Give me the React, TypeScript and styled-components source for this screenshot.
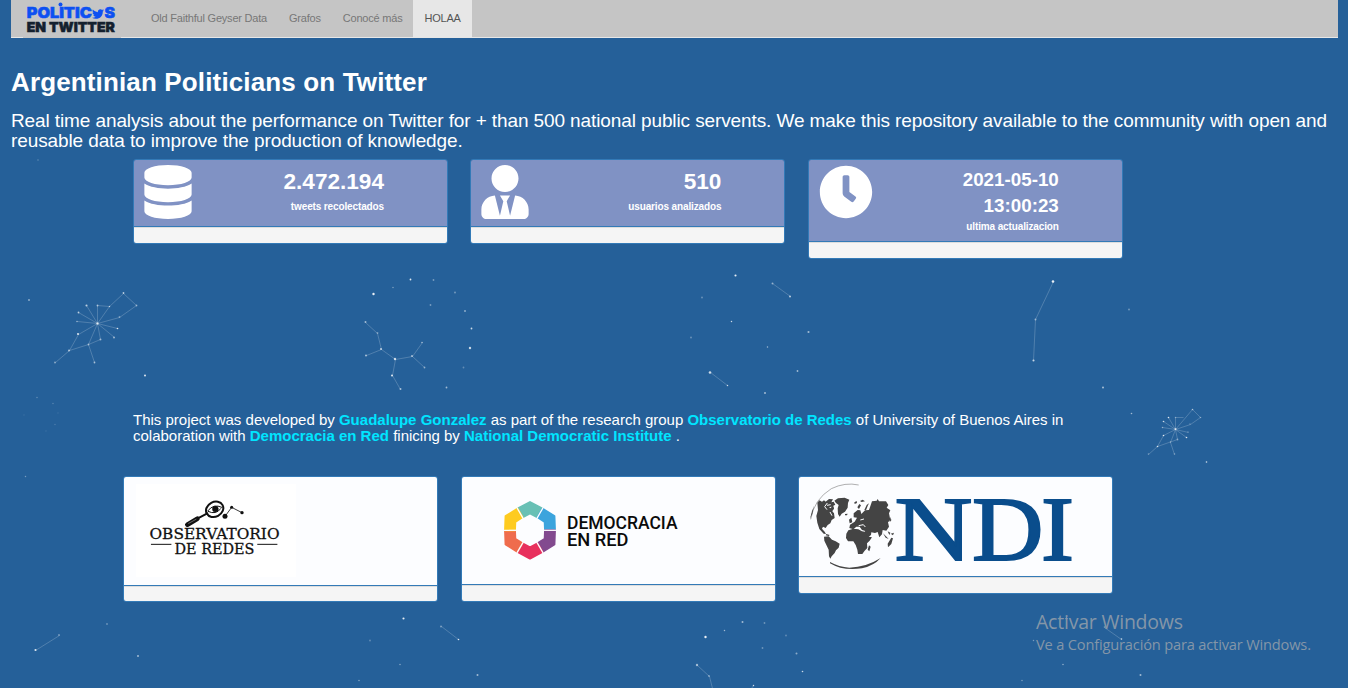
import React from 'react';
import styled, { createGlobalStyle } from 'styled-components';
import { FaClock, FaDatabase, FaTwitter, FaUserTie } from 'react-icons/fa';

const GlobalStyle = createGlobalStyle`
  * { box-sizing: border-box; }
  body {
    margin: 0;
    background: #256099;
    color: #fff;
    font-family: "Liberation Sans", Arial, sans-serif;
    overflow: hidden;
  }
`;

const Page = styled.div`
  position: relative;
  height: 688px;
  padding: 0 10px 0 11px;
  overflow: hidden;
`;

const Sky = styled.svg`
  position: absolute;
  inset: 0;
  pointer-events: none;
`;

const Navbar = styled.nav`
  position: relative;
  display: flex;
  height: 38px;
  background: #c5c5c5;
  border-bottom: 1px solid #e7e7e7;
`;

const Brand = styled.a`
  display: block;
  width: 98px;
  height: 38px;
  margin: 0 19px 0 12px;
  background: #c5c5c5;
`;

const NavItem = styled.a<{ $active?: boolean }>`
  height: 37px;
  padding: 0 11px;
  font-size: 11px;
  line-height: 37px;
  white-space: nowrap;
  letter-spacing: -0.21px;
  color: ${(p) => (p.$active ? '#555' : '#777')};
  background: ${(p) => (p.$active ? '#e7e7e7' : 'transparent')};
`;

const Content = styled.main`
  position: relative;
`;

const Title = styled.h1`
  margin: 28px 0 0;
  font-size: 26px;
  line-height: 32px;
  font-weight: 700;
  letter-spacing: 0.14px;
  white-space: nowrap;
`;

const Lead = styled.p`
  margin: 13px 0 0;
  font-size: 19px;
  line-height: 20px;
  letter-spacing: -0.107px;
  white-space: nowrap;
`;

const CardRow = styled.section<{ $left: number; $top: number; $height: number }>`
  display: flex;
  align-items: flex-start;
  gap: 22.4px;
  height: ${(p) => p.$height}px;
  margin: ${(p) => p.$top}px 0 0 ${(p) => p.$left}px;
`;

const Panel = styled.article`
  width: 315px;
  flex: none;
  border: 1px solid #337ab7;
  border-radius: 3px;
  overflow: hidden;
`;

const StatHeading = styled.div<{ $height: number }>`
  display: flex;
  justify-content: space-between;
  height: ${(p) => p.$height}px;
  padding: 5px 63px 0 10px;
  background: #8092c4;
  border-bottom: 1px solid #337ab7;
`;

const StatText = styled.div`
  text-align: right;
  font-weight: 700;
`;

const StatValue = styled.div<{ $small?: boolean }>`
  margin-top: ${(p) => (p.$small ? 2 : 4)}px;
  font-size: ${(p) => (p.$small ? 18.8 : 22.6)}px;
  line-height: 26px;
  white-space: pre-line;
`;

const StatLabel = styled.div<{ $small?: boolean }>`
  margin-top: ${(p) => (p.$small ? 1 : 5)}px;
  font-size: 10px;
  line-height: 14px;
  letter-spacing: -0.13px;
`;

const PanelFooter = styled.div<{ $height?: number }>`
  height: ${(p) => p.$height ?? 16}px;
  background: #f5f5f5;
  border-top: 1px solid #ddd;
`;

const LogoBody = styled.div<{ $height: number }>`
  height: ${(p) => p.$height}px;
  background: #fcfdff;
  border-bottom: 1px solid #337ab7;
`;

const LogoSvg = styled.svg`
  display: block;
  overflow: visible;
`;

const Credits = styled.p`
  margin: 152px 0 0 122px;
  font-size: 15px;
  line-height: 16px;
  white-space: nowrap;
`;

const CreditLink = styled.a`
  color: #00e5ff;
  font-weight: 700;
`;

const Watermark = styled.div`
  position: absolute;
  left: 1036px;
  top: 609px;
  color: #8496a8;
  font-family: "Open Sans", "Noto Sans", sans-serif;
  white-space: nowrap;
`;

const WatermarkTitle = styled.div`
  font-size: 19.5px;
  line-height: 26px;
  letter-spacing: -0.22px;
`;

const WatermarkText = styled.div`
  font-size: 14.6px;
  line-height: 19px;
  letter-spacing: -0.16px;
`;

type Star = [x: number, y: number, r: number, opacity: number];
type Link = [x1: number, y1: number, x2: number, y2: number];

const stars: Star[] = [
  [29, 300, 1.1, 0.5], [145, 375.5, 1.2, 0.85], [123.5, 293, 1, 0.7], [136.5, 305.5, 1, 0.5],
  [86.5, 305.5, 1.2, 0.7], [97.5, 305.5, 1, 0.6], [109.5, 306.5, 0.8, 0.7], [78.5, 312.5, 1, 0.7],
  [77, 321.5, 0.8, 0.6], [97.5, 323.5, 1.3, 0.7], [119.5, 317, 1, 0.4], [117.5, 328.5, 0.9, 0.9],
  [78, 334, 1.1, 0.9], [114, 337.5, 1, 0.6], [100.5, 339.5, 1.1, 0.5], [88.5, 344.5, 1, 0.5],
  [69, 350.5, 1, 0.7], [55, 362.5, 1, 0.5], [94.5, 362.5, 1, 0.6],
  [37, 397.5, 0.8, 0.3], [53, 403.5, 0.8, 0.25], [55, 424.5, 0.8, 0.2], [25.5, 476.5, 0.8, 0.4],
  [38, 160, 0.8, 0.3], [24, 415, 0.7, 0.12], [46, 431, 0.7, 0.12], [58, 413, 0.7, 0.12],
  [373.5, 294, 1.3, 0.95], [393, 287.5, 0.9, 0.4], [410.5, 279.5, 1, 0.9], [433.5, 280, 1, 0.4],
  [455, 292.5, 1, 0.4], [430.5, 305, 1, 0.4], [465, 311, 1.1, 0.5], [471.5, 328.5, 1, 0.8],
  [470, 348, 1.3, 0.8], [463.5, 367.5, 1, 0.3], [446.5, 387.5, 1, 0.6],
  [365.5, 322, 1.1, 0.6], [377.5, 333, 1, 0.4], [381, 349, 1.1, 0.7], [366, 355.5, 1, 0.7],
  [395, 359, 1.3, 0.8], [412, 356, 1.1, 0.6], [422, 342.5, 0.9, 0.6], [424.5, 367.5, 1, 0.5],
  [392, 375.5, 1.2, 0.85], [400.5, 389, 1.1, 0.6],
  [735.5, 275.5, 1.2, 0.95], [702, 297.5, 1, 0.35], [731.5, 321.5, 0.8, 0.8], [691, 337.5, 1, 0.35],
  [772.5, 283.5, 1.1, 0.5], [790, 296.5, 1.1, 0.7], [808.5, 332, 1.2, 0.6], [767.5, 347, 0.8, 0.6],
  [710, 372.5, 1.4, 0.8], [727.5, 385.5, 0.8, 0.8], [797.5, 371, 1, 0.6], [765, 393, 1.1, 0.6],
  [1053, 281.5, 1.4, 0.95], [1035.5, 319.5, 1.1, 0.5], [1033.5, 360.5, 1.2, 0.75],
  [1129, 309.5, 1.1, 0.35], [1103, 387.5, 1.2, 0.6],
  [1131.5, 413.5, 0.9, 0.6], [1168.5, 417.5, 0.9, 0.9], [1175.5, 417.5, 0.8, 0.4], [1163.5, 421.5, 0.9, 0.8],
  [1192.5, 409.5, 0.9, 0.6], [1200.5, 417.5, 0.9, 0.4], [1162.5, 427.5, 0.8, 0.5], [1175.5, 429, 1.1, 0.7],
  [1163.5, 435.5, 0.9, 0.9], [1186.5, 437.5, 0.9, 0.9], [1177.5, 439.5, 1, 0.4], [1157.5, 446.5, 0.9, 0.8],
  [1148.5, 454, 0.9, 0.4], [1174.5, 454, 0.9, 0.4], [1190, 424, 0.8, 0.3], [1206.5, 462, 0.9, 0.85],
  [1188, 432, 0.8, 0.3], [1170.5, 442, 0.8, 0.4],
  [35.5, 650, 1.2, 0.9], [59, 635, 1, 0.4], [107, 624, 1, 0.35], [138, 656, 1.1, 0.6],
  [403.5, 618.5, 1.2, 0.95], [441, 626.5, 1, 0.45], [458.5, 639.5, 0.9, 0.9], [370, 640.5, 1, 0.3],
  [400, 664.5, 0.9, 0.45], [359, 680.5, 0.8, 0.5], [477.5, 675, 1.1, 0.6],
  [705.5, 637, 1.3, 0.95], [724.5, 630.5, 0.8, 0.6], [742.5, 622, 1.1, 0.6], [764.5, 623, 1, 0.35],
  [786, 635.5, 1, 0.3], [762.5, 648, 1, 0.35], [796.5, 653.5, 1.1, 0.5], [802.5, 671.5, 0.9, 0.8],
  [697, 665, 1.3, 0.6], [709, 676, 1, 0.45], [753.5, 685.5, 0.8, 0.8],
  [1066.5, 618.5, 1, 0.9], [1104.5, 627, 0.9, 0.4], [1121.5, 639, 0.9, 0.8], [1033.5, 640.5, 0.8, 0.4],
  [1063, 664.5, 0.9, 0.5], [1022, 680.5, 0.9, 0.4], [1140.5, 675, 1.1, 0.6],
];

const links: Link[] = [
  [97, 323, 86, 305], [97, 323, 97, 305], [97, 323, 109, 306], [97, 323, 78, 312], [97, 323, 77, 321],
  [97, 323, 119, 317], [97, 323, 117, 328], [97, 323, 78, 334], [97, 323, 114, 337], [97, 323, 100, 339],
  [97, 323, 88, 344], [97, 305, 109, 306], [109, 306, 123, 293], [123, 293, 136, 305], [136, 305, 119, 317],
  [78, 334, 69, 350], [69, 350, 55, 362], [69, 350, 88, 344], [88, 344, 100, 339], [88, 344, 94, 362],
  [365, 322, 377, 333], [377, 333, 381, 349], [381, 349, 366, 355], [381, 349, 395, 359],
  [395, 359, 412, 356], [412, 356, 422, 342], [412, 356, 424, 367], [395, 359, 392, 375], [392, 375, 400, 389],
  [772, 283, 790, 296], [710, 372, 727, 385], [1053, 281, 1035, 319], [1035, 319, 1033, 360],
  [1175, 429, 1168, 417], [1175, 429, 1175, 417], [1175, 429, 1192, 409], [1175, 429, 1163, 421],
  [1175, 429, 1162, 427], [1175, 429, 1190, 424], [1190, 424, 1200, 417], [1192, 409, 1200, 417],
  [1175, 429, 1188, 432], [1175, 429, 1186, 437], [1175, 429, 1177, 439], [1175, 429, 1163, 435],
  [1163, 435, 1157, 446], [1157, 446, 1148, 454], [1157, 446, 1177, 439], [1175, 429, 1170, 442],
  [1170, 442, 1174, 454], [1175, 417, 1183, 417],
  [35, 650, 59, 635], [441, 626, 458, 639], [697, 665, 709, 676], [709, 676, 712, 688], [753, 685, 751, 688],
  [1104, 627, 1121, 639],
];

const Constellations = () => (
  <Sky width="1348" height="688" viewBox="0 0 1348 688" aria-hidden="true">
    {links.map(([x1, y1, x2, y2], i) => (
      <line key={i} x1={x1 + 0.5} y1={y1 + 0.5} x2={x2 + 0.5} y2={y2 + 0.5} stroke="#fff" strokeOpacity="0.22" strokeWidth="0.9" />
    ))}
    {stars.map(([x, y, r, o], i) => (
      <circle key={i} cx={x} cy={y} r={r * 0.9} fill="#fff" fillOpacity={o * 0.95} />
    ))}
  </Sky>
);

const BrandLogo = () => (
  <svg width="98" height="37" viewBox="23 0 98 37">
    <g fontFamily="Inter, sans-serif" fontWeight="900" fontSize="14.5" strokeWidth="0.5">
      <g fill="#0d50f2" stroke="#0d50f2">
        <text x="26.8" y="18.3" textLength="65" lengthAdjust="spacingAndGlyphs">POLITIC</text>
        <text x="104.5" y="18.3" textLength="10.5" lengthAdjust="spacingAndGlyphs">S</text>
      </g>
      <text x="26.8" y="31.8" fill="#14202e" stroke="#14202e" fontSize="13.5" textLength="88" lengthAdjust="spacingAndGlyphs">EN TWITTER</text>
    </g>
    <circle cx="60.5" cy="4.6" r="2" fill="#0d50f2" />
    <FaTwitter x="92" y="8" width="12" height="12" size={12} color="#0d50f2" />
  </svg>
);

const ObservatorioLogo = () => (
  <LogoSvg width="313" height="108" viewBox="124 477 313 108">
    <rect x="136" y="484" width="160" height="93" fill="#fff" />
    <g transform="translate(120 470) scale(0.33333)" stroke="#111" fill="none" strokeLinecap="round">
      <path d="M202 164 L232 146" strokeWidth="14" />
      <path d="M232 146 L262 130" strokeWidth="6" />
      <ellipse cx="284" cy="118" rx="27" ry="22" strokeWidth="6" transform="rotate(-28 284 118)" />
      <path d="M264 122 Q280 100 306 112 M264 124 Q288 136 302 116" strokeWidth="3" />
      <circle cx="286" cy="117" r="9" fill="#111" strokeWidth="1" />
      <path d="M315 139 L335 112 L366 128" strokeWidth="2.5" />
      <circle cx="315" cy="139" r="7.5" fill="#111" stroke="none" />
      <circle cx="335" cy="112" r="4.5" fill="#111" stroke="none" />
      <circle cx="366" cy="128" r="5" fill="#111" stroke="none" />
      <path d="M206 160 L228 148" stroke="#999" strokeWidth="2" />
      <path d="M94 223 H153 M413 223 H471" strokeWidth="3" />
    </g>
    <g fontFamily='"DejaVu Serif", serif' fill="#111" stroke="#111" strokeWidth="0.3">
      <text x="149.5" y="539.4" fontSize="14.6" textLength="130" lengthAdjust="spacingAndGlyphs">OBSERVATORIO</text>
      <text x="174.5" y="554.4" fontSize="14.6" textLength="80" lengthAdjust="spacingAndGlyphs">DE REDES</text>
    </g>
  </LogoSvg>
);

const hexColors = ['#68c0b5', '#3ca4dd', '#824a8f', '#e8305d', '#ef6c4d', '#fecb20'];

const hexPoint = (radius: number, step: number): [number, number] => {
  const angle = (step * Math.PI) / 3 - Math.PI / 2;
  return [530 + radius * Math.cos(angle), 530.3 + radius * Math.sin(angle)];
};

const mid = (radius: number, step: number): [number, number] =>
  hexPoint(radius * Math.cos(Math.PI / 6), step + 0.5);

const DemocraciaLogo = () => (
  <LogoSvg width="313" height="107" viewBox="462 477 313 107">
    {hexColors.map((color, i) => {
      const points = [mid(28.8, i - 1), hexPoint(28.2, i), mid(28.8, i), mid(17.4, i), hexPoint(17, i), mid(17.4, i - 1)];
      return <polygon key={color} points={points.map((p) => p.join(',')).join(' ')} fill={color} stroke={color} strokeWidth="2" strokeLinejoin="round" />;
    })}
    {hexColors.map((color, i) => {
      const a = mid(14, i);
      const b = mid(34.5, i);
      return <line key={color} x1={a[0]} y1={a[1]} x2={b[0]} y2={b[1]} stroke="#fcfdff" strokeWidth="1.3" />;
    })}
    <g fontFamily="Roboto, sans-serif" fontWeight="500" fontSize="18.6" fill="#0b0b0b">
      <text x="567" y="529.3" textLength="110.5" lengthAdjust="spacingAndGlyphs">DEMOCRACIA</text>
      <text x="567" y="545.6" textLength="61.5" lengthAdjust="spacingAndGlyphs">EN RED</text>
    </g>
  </LogoSvg>
);

const NdiLogo = () => (
  <LogoSvg width="313" height="99" viewBox="799 477 313 99">
    <g transform="translate(790 470) scale(0.33333)" fill="#444">
      <path d="M62 148 Q72 88 124 56 Q165 36 206 45" fill="none" stroke="#888" strokeWidth="2" />
      <path d="M60 146 L66 124 L72 108 L67 132 Z" />
      <path d="M82 98 L88 91 L96 95 L102 91 L108 96 L116 94 L120 102 L114 108 L121 115 L128 108 L132 115 L127 124 L132 130 L134 144 L125 150 L121 160 L113 165 L107 174 L99 170 L96 176 L104 185 L108 192 L101 191 L88 177 L82 158 L79 138 L84 120 Z" />
      <path d="M106 96 L117 87 L129 88 L124 97 L131 95 L136 104 L130 107 L132 120 L125 110 L114 112 Z" />
      <path d="M133 92 L144 85 L164 83 L178 89 L174 99 L173 113 L165 125 L155 131 L149 140 L144 132 L143 115 L146 105 L138 99 Z" />
      <path d="M102 200 L116 199 L126 209 L137 214 L149 221 L146 233 L138 241 L134 249 L125 259 L121 266 L117 259 L116 239 L108 223 L103 212 Z" />
      <path d="M175 181 L190 176 L205 178 L216 184 L232 187 L236 200 L246 202 L239 212 L231 220 L232 234 L224 242 L217 252 L204 252 L202 239 L197 225 L190 214 L174 214 L168 204 L169 191 Z" />
      <path d="M180 164 L194 155 L201 143 L191 142 L191 130 L203 120 L211 121 L214 132 L225 121 L237 120 L246 94 L260 92 L263 87 L267 94 L288 94 L295 105 L290 113 L301 121 L297 130 L301 150 L294 157 L297 170 L289 182 L278 180 L276 193 L268 202 L263 186 L255 189 L244 187 L243 195 L233 203 L224 182 L216 180 L209 170 L199 170 L190 178 L178 174 Z" />
      <path d="M293 221 L304 203 L309 205 L304 222 L294 232 Z M237 226 L242 230 L238 244 L233 239 Z M177 149 L184 143 L187 157 L179 160 Z M193 97 L200 93 L201 99 L194 102 Z M210 93 L218 89 L225 94 L215 96 Z M165 132 L173 131 L171 136 L165 136 Z M302 140 L304 151 L299 157 Z M279 190 L288 199 L296 207 L287 203 Z M293 184 L301 188 L298 195 Z M302 191 L312 188 L309 196 Z M109 192 L119 195 L116 198 L107 196 Z" />
      <path d="M120 276 Q147 291 178 293 Q230 291 272 264 Q252 287 216 295 Q180 300 151 293 Q135 289 120 280 Z" />
      <path d="M223 120 L230 105 L237 100 L233 108 L228 121 Z M202 112 L208 102 L213 106 L207 117 Z" />
      <path d="M112 99 L104 110 L111 119 M120 126 L126 137 M211 150 L222 147 M206 167 L220 164 L226 171 M111 106 L122 104" stroke="#fcfdff" strokeWidth="3" fill="none" />
    </g>
    <g fontFamily='"Liberation Serif", serif' fontSize="91" fill="#0a4d8c" stroke="#0a4d8c" strokeWidth="1.8">
      <text x="894.5" y="559.7" textLength="78" lengthAdjust="spacingAndGlyphs">N</text>
      <text x="972" y="559.7" textLength="71.5" lengthAdjust="spacingAndGlyphs">D</text>
      <text x="1041" y="559.7" textLength="33" lengthAdjust="spacingAndGlyphs">I</text>
    </g>
  </LogoSvg>
);

type StatProps = { icon: React.ReactNode; value: string; label: string; height: number; small?: boolean };

const StatPanel = ({ icon, value, label, height, small }: StatProps) => (
  <Panel>
    <StatHeading $height={height}>
      {icon}
      <StatText>
        <StatValue $small={small}>{value}</StatValue>
        <StatLabel $small={small}>{label}</StatLabel>
      </StatText>
    </StatHeading>
    <PanelFooter />
  </Panel>
);

type LogoPanelProps = { height: number; footer?: number; children: React.ReactNode };

const LogoPanel = ({ height, footer, children }: LogoPanelProps) => (
  <Panel>
    <LogoBody $height={height}>{children}</LogoBody>
    <PanelFooter $height={footer} />
  </Panel>
);

const DatabaseIcon = styled(FaDatabase)`
  width: 48px;
  height: 54px;
`;

const UserIcon = styled(FaUserTie)`
  width: 48px;
  height: 54px;
`;

const ClockIcon = styled(FaClock)`
  width: 54px;
  height: 54px;
`;

export default function App() {
  return (
    <Page>
      <GlobalStyle />
      <Constellations />
      <Navbar>
        <Brand><BrandLogo /></Brand>
        <NavItem>Old Faithful Geyser Data</NavItem>
        <NavItem>Grafos</NavItem>
        <NavItem>Conocé más</NavItem>
        <NavItem $active>HOLAA</NavItem>
      </Navbar>
      <Content>
        <Title>Argentinian Politicians on Twitter</Title>
        <Lead>
          Real time analysis about the performance on Twitter for + than 500 national public servents. We make this repository available to the community with open and
          <br />
          reusable data to improve the production of knowledge.
        </Lead>
        <CardRow $left={122} $top={8} $height={101}>
          <StatPanel icon={<DatabaseIcon />} value="2.472.194" label="tweets recolectados" height={67} />
          <StatPanel icon={<UserIcon />} value="510" label="usuarios analizados" height={67} />
          <StatPanel icon={<ClockIcon />} value={'2021-05-10\n13:00:23'} label="ultima actualizacion" height={82} small />
        </CardRow>
        <Credits>
          This project was developed by <CreditLink>Guadalupe Gonzalez</CreditLink> as part of the research group{' '}
          <CreditLink>Observatorio de Redes</CreditLink> of University of Buenos Aires in
          <br />
          colaboration with <CreditLink>Democracia en Red</CreditLink> finicing by{' '}
          <CreditLink>National Democratic Institute</CreditLink> .
        </Credits>
        <CardRow $left={112.4} $top={32} $height={126}>
          <LogoPanel height={109} footer={15}><ObservatorioLogo /></LogoPanel>
          <LogoPanel height={108}><DemocraciaLogo /></LogoPanel>
          <LogoPanel height={100}><NdiLogo /></LogoPanel>
        </CardRow>
      </Content>
      <Watermark>
        <WatermarkTitle>Activar Windows</WatermarkTitle>
        <WatermarkText>Ve a Configuración para activar Windows.</WatermarkText>
      </Watermark>
    </Page>
  );
}
